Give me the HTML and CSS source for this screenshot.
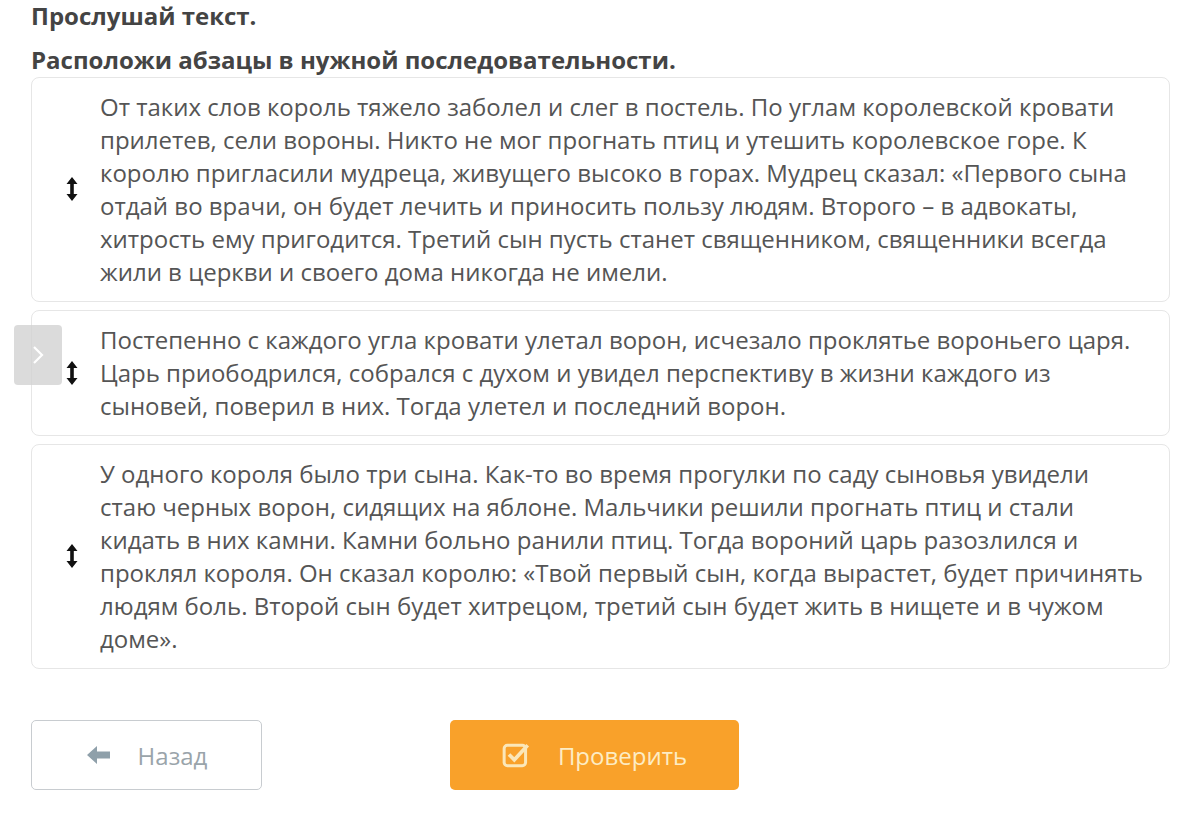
FILE: index.html
```html
<!DOCTYPE html>
<html lang="ru">
<head>
  <meta charset="UTF-8" />
  <title>Расположи абзацы</title>
  <link rel="stylesheet" href="styles.css">
</head>
<body>
  <div class="task">
    <p class="title">Прослушай текст.</p>
    <p class="title second">Расположи абзацы в нужной последовательности.</p>

    <div class="list">
      <div class="item">
        <div class="handle">
          <svg width="12" height="26" viewBox="0 0 12 26"><path d="M6 1 L11.5 8 H7.8 V18 H11.5 L6 25 L0.5 18 H4.2 V8 H0.5 Z" fill="#111"/></svg>
        </div>
        <div class="text">От таких слов король тяжело заболел и слег в постель. По углам королевской кровати прилетев, сели вороны. Никто не мог прогнать птиц и утешить королевское горе. К королю пригласили мудреца, живущего высоко в горах. Мудрец сказал: «Первого сына отдай во врачи, он будет лечить и приносить пользу людям. Второго – в адвокаты, хитрость ему пригодится. Третий сын пусть станет священником, священники всегда жили в церкви и своего дома никогда не имели.</div>
      </div>
      <div class="item">
        <div class="handle">
          <svg width="12" height="26" viewBox="0 0 12 26"><path d="M6 1 L11.5 8 H7.8 V18 H11.5 L6 25 L0.5 18 H4.2 V8 H0.5 Z" fill="#111"/></svg>
        </div>
        <div class="text">Постепенно с каждого угла кровати улетал ворон, исчезало проклятье вороньего царя. Царь приободрился, собрался с духом и увидел перспективу в жизни каждого из сыновей, поверил в них. Тогда улетел и последний ворон.</div>
        <div class="side-tab">
          <svg width="14" height="22" viewBox="0 0 14 22"><path d="M3 3 L11 11 L3 19" fill="none" stroke="#fff" stroke-width="2.2"/></svg>
        </div>
      </div>
      <div class="item">
        <div class="handle">
          <svg width="12" height="26" viewBox="0 0 12 26"><path d="M6 1 L11.5 8 H7.8 V18 H11.5 L6 25 L0.5 18 H4.2 V8 H0.5 Z" fill="#111"/></svg>
        </div>
        <div class="text">У одного короля было три сына. Как-то во время прогулки по саду сыновья увидели стаю черных ворон, сидящих на яблоне. Мальчики решили прогнать птиц и стали кидать в них камни. Камни больно ранили птиц. Тогда вороний царь разозлился и проклял короля. Он сказал королю: «Твой первый сын, когда вырастет, будет причинять людям боль. Второй сын будет хитрецом, третий сын будет жить в нищете и в чужом доме».</div>
      </div>
    </div>

    <div class="actions">
      <button class="btn btn-back">
        <svg width="26" height="22" viewBox="0 0 26 22"><path d="M1 11 L11 2 V7.5 H24 V14.5 H11 V20 Z" fill="#8fa0aa"/></svg>
        <span>Назад</span>
      </button>
      <button class="btn btn-check">
        <svg width="30" height="28" viewBox="0 0 28 26"><rect x="2" y="4" width="20" height="19" rx="3" fill="none" stroke="#fbe7b8" stroke-width="2.8"/><path d="M6.5 12.5 L11.5 17.5 L24 4" fill="none" stroke="#fbe7b8" stroke-width="3.4"/></svg>
        <span>Проверить</span>
      </button>
    </div>
  </div>
</body>
</html>
```

FILE: styles.css
```css
body { margin: 0; background: #fff; font-family: "Open Sans", "Noto Sans", sans-serif; color: #555; }
.task { padding: 0 30px 0 31px; }
.title { margin: 0; font-size: 24px; font-weight: bold; color: #444; line-height: 32px; }
.second { margin-top: 12px; }
.list { display: flex; flex-direction: column; gap: 8px; margin-top: 1px; }
.item { position: relative; display: flex; align-items: center; border: 1px solid #e6e6e6; border-radius: 8px; padding: 12px 20px 13px 0; }
.handle { width: 34px; padding-left: 34px; display: flex; flex-shrink: 0; }
.text { font-size: 24px; line-height: 33px; color: #555; }
.side-tab { position: absolute; left: -18px; top: 14px; width: 48px; height: 60px; background: rgba(210,210,210,0.8); border-radius: 4px; display: flex; align-items: center; justify-content: center; }
.actions { display: flex; gap: 188px; margin-top: 51px; }
.btn { display: flex; align-items: center; justify-content: center; gap: 26px; height: 70px; border-radius: 5px; font-family: "Open Sans", sans-serif; font-size: 24px; cursor: pointer; }
.btn-back { width: 231px; background: #fff; border: 1px solid #c8ccd0; color: #9aa4aa; }
.btn-check { width: 289px; background: #f9a12a; border: none; color: #fdecc4; }
```
